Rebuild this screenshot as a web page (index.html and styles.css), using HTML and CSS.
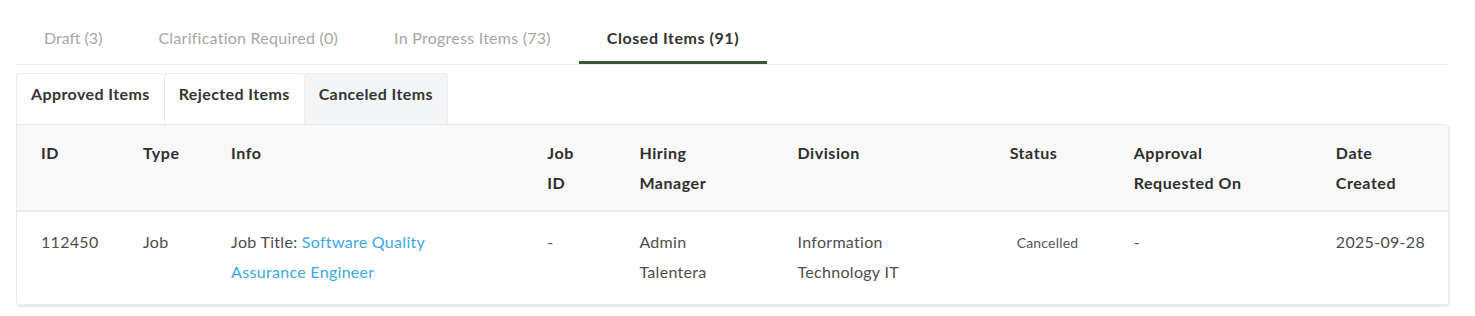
FILE: index.html
```html
<!DOCTYPE html>
<html lang="en">
<head>
<meta charset="utf-8">
<title>Closed Items</title>
<link rel="stylesheet" href="styles.css">
</head>
<body>
<div class="page">
  <nav class="tabs">
    <a class="tab">Draft (3)</a>
    <a class="tab">Clarification Required (0)</a>
    <a class="tab">In Progress Items (73)</a>
    <a class="tab active">Closed Items (91)</a>
  </nav>
  <div class="subtabs">
    <a class="subtab">Approved Items</a>
    <a class="subtab">Rejected Items</a>
    <a class="subtab current">Canceled Items</a>
  </div>
  <div class="card">
    <table class="grid">
      <colgroup>
        <col class="c-id"><col class="c-type"><col class="c-info"><col class="c-job"><col class="c-hm"><col class="c-div"><col class="c-status"><col class="c-appr"><col class="c-date">
      </colgroup>
      <thead>
        <tr>
          <th>ID</th>
          <th>Type</th>
          <th>Info</th>
          <th>Job ID</th>
          <th>Hiring Manager</th>
          <th>Division</th>
          <th>Status</th>
          <th class="narrow">Approval Requested On</th>
          <th>Date Created</th>
        </tr>
      </thead>
      <tbody>
        <tr>
          <td>112450</td>
          <td>Job</td>
          <td class="info">Job Title: <a class="link">Software Quality Assurance Engineer</a></td>
          <td>-</td>
          <td>Admin Talentera</td>
          <td>Information Technology IT</td>
          <td><span class="status">Cancelled</span></td>
          <td>-</td>
          <td class="date">2025-09-28</td>
        </tr>
      </tbody>
    </table>
  </div>
</div>
</body>
</html>
```

FILE: styles.css
```css
* { box-sizing: border-box; }
html, body { margin: 0; background: #fff; }
body {
  font-family: Lato, "Open Sans", "Liberation Sans", sans-serif;
  font-size: 16px;
  letter-spacing: 0.3px;
  color: #4d4d4d;
}
.page {
  padding: 14px 26px 0 16px;
}
.tabs {
  display: flex;
  border-bottom: 1px solid #ececec;
}
.tab {
  padding: 12px 28px 11px;
  line-height: 24px;
  color: #a6a6a6;
  letter-spacing: 0.25px;
  border-bottom: 3px solid transparent;
}
.tab:first-child {
  letter-spacing: 0;
}
.tab.active {
  color: #333;
  font-weight: 700;
  letter-spacing: 0.55px;
  border-bottom-color: #3b5638;
}
.subtabs {
  display: flex;
  margin-top: 8px;
}
.subtab {
  padding: 8px 14px 18px;
  line-height: 24px;
  font-weight: 700;
  letter-spacing: 0.4px;
  color: #333;
  background: #fff;
  border: 1px solid #ebebeb;
  border-bottom: 0;
  border-right: 0;
  border-radius: 4px 4px 0 0;
}
.subtab.current {
  background: #f4f5f7;
  border-right: 1px solid #ebebeb;
}
.card {
  border: 1px solid #e8e8e8;
  border-radius: 0 4px 4px 4px;
  box-shadow: 1px 1px 2px rgba(0, 0, 0, 0.08);
  overflow: hidden;
}
.grid {
  width: 100%;
  border-collapse: collapse;
  table-layout: fixed;
}
.c-id { width: 102px; }
.c-type { width: 88px; }
.c-info { width: 316px; }
.c-job { width: 92px; }
.c-hm { width: 158px; }
.c-div { width: 212px; }
.c-status { width: 124px; }
.c-appr { width: 202px; }
.c-date { width: 136px; }
.grid th {
  text-align: left;
  vertical-align: top;
  font-weight: 700;
  letter-spacing: 0.55px;
  color: #2e2e2e;
  line-height: 30px;
  padding: 13px 24px 12px;
  background: #f8f8f8;
  border-bottom: 2px solid #ececec;
}
.grid th.narrow {
  padding-right: 60px;
}
.grid td {
  vertical-align: top;
  line-height: 30px;
  padding: 15px 24px 17px;
  border-bottom: 2px solid #ececec;
}
.grid td.info {
  padding-right: 34px;
}
.grid td.date {
  white-space: nowrap;
  padding-right: 8px;
}
.link {
  color: #3da8e0;
}
.status {
  display: inline-block;
  padding: 0 7px;
  font-size: 14px;
  letter-spacing: 0.2px;
  color: #555;
}
```
